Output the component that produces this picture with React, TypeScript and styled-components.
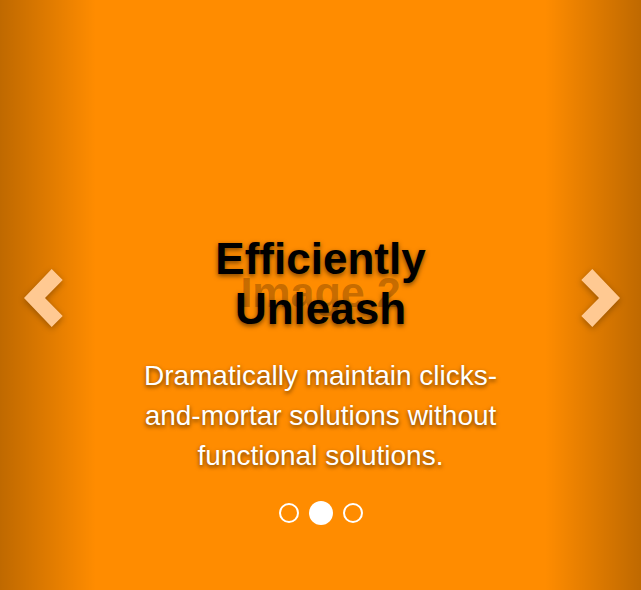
import React from "react";
import styled, { createGlobalStyle, css } from "styled-components";

const GlobalStyle = createGlobalStyle`
  html, body {
    margin: 0;
    padding: 0;
    background: #ff8c00;
  }
  body {
    font-family: "Liberation Sans", Arial, Helvetica, sans-serif;
  }
`;

const Carousel = styled.div`
  position: relative;
  width: 100%;
  height: 590px;
  overflow: hidden;
  background: #ff8c00;
`;

const Slide = styled.div`
  height: 100%;
  display: flex;
  align-items: center;
  justify-content: center;
  padding-bottom: 6px;
  box-sizing: border-box;
`;

const Placeholder = styled.span`
  font-family: "Liberation Sans", Arial, sans-serif;
  font-weight: bold;
  font-size: 43px;
  color: rgba(150, 80, 0, 0.55);
`;

const Control = styled.div<{ $side: "left" | "right" }>`
  position: absolute;
  top: 0;
  bottom: 0;
  width: 15%;
  display: flex;
  align-items: center;
  box-sizing: border-box;
  padding-top: 6px;
  ${(p) =>
    p.$side === "left"
      ? css`
          left: 0;
          justify-content: flex-start;
          padding-left: 24px;
          background: linear-gradient(to right, rgba(0, 0, 0, 0.25) 0, rgba(0, 0, 0, 0) 100%);
        `
      : css`
          right: 0;
          justify-content: flex-end;
          padding-right: 21px;
          background: linear-gradient(to left, rgba(0, 0, 0, 0.25) 0, rgba(0, 0, 0, 0) 100%);
        `}
`;

const ChevronSvg = styled.svg`
  display: block;
  filter: drop-shadow(0 2px 3px rgba(0, 0, 0, 0.3));
`;

const Chevron: React.FC<{ dir: "left" | "right" }> = ({ dir }) => (
  <ChevronSvg width="39" height="58" viewBox="0 0 39 58">
    <polygon
      points={
        dir === "left"
          ? "27.7,0 38.7,11 21,29 38.7,47 27.7,58 0,29"
          : "11.3,0 0.3,11 18,29 0.3,47 11.3,58 39,29"
      }
      fill="#ffc992"
    />
  </ChevronSvg>
);

const Caption = styled.div`
  position: absolute;
  left: 20%;
  right: 20%;
  bottom: 114px;
  text-align: center;
  display: flex;
  flex-direction: column;
  gap: 22px;
`;

const Title = styled.h3`
  margin: 0;
  font-family: "Liberation Sans", Arial, sans-serif;
  font-weight: bold;
  font-size: 44px;
  line-height: 50px;
  color: #000;
  text-shadow: 0 2px 5px rgba(0, 0, 0, 0.55);
`;

const Text = styled.p`
  margin: 0;
  font-family: "Liberation Sans", Arial, sans-serif;
  font-size: 28px;
  line-height: 40px;
  color: #fff;
  text-shadow: 0 2px 4px rgba(0, 0, 0, 0.6);
`;

const Indicators = styled.ol`
  position: absolute;
  left: 0;
  right: 0;
  bottom: 65px;
  margin: 0;
  padding: 0;
  list-style: none;
  display: flex;
  justify-content: center;
  align-items: center;
  gap: 10px;
  padding-left: 1px;
`;

const Dot = styled.li<{ $active?: boolean }>`
  box-sizing: border-box;
  border-radius: 50%;
  ${(p) =>
    p.$active
      ? css`
          width: 24px;
          height: 24px;
          background: #fff;
        `
      : css`
          width: 20px;
          height: 20px;
          border: 2px solid #fff;
          background: transparent;
        `}
`;

export default function App() {
  return (
    <>
      <GlobalStyle />
      <Carousel>
        <Slide>
          <Placeholder>Image 2</Placeholder>
        </Slide>
        <Control $side="left">
          <Chevron dir="left" />
        </Control>
        <Control $side="right">
          <Chevron dir="right" />
        </Control>
        <Caption>
          <Title>
            Efficiently
            <br />
            Unleash
          </Title>
          <Text>
            Dramatically maintain clicks-and-mortar solutions without functional solutions.
          </Text>
        </Caption>
        <Indicators>
          <Dot />
          <Dot $active />
          <Dot />
        </Indicators>
      </Carousel>
    </>
  );
}
